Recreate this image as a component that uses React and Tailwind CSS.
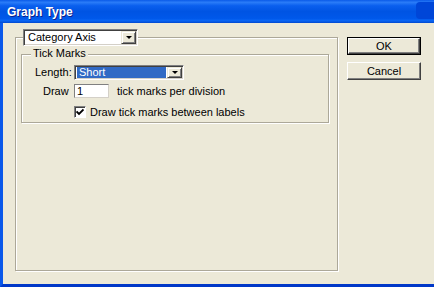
import React from "react";

function Combo({ width, height, text, selected }) {
  return (
    <div
      className="flex bg-white border border-t-[#808080] border-l-[#808080] border-b-white border-r-white shadow-[inset_1px_1px_0_#404040,inset_-1px_-1px_0_#d4d0c8]"
      style={{ width, height }}
    >
      <div className="flex-1 flex items-center p-[1px] pl-[2px] pr-0">
        <div
          className={
            "flex-1 h-full flex items-center pl-[2px] leading-none " +
            (selected ? "bg-[#316ac5] text-white" : "text-black")
          }
        >
          {text}
        </div>
      </div>
      <div className="w-[15px] m-[1px] ml-[1px] bg-[#ece9d8] flex items-center justify-center border border-t-[#ece9d8] border-l-[#ece9d8] border-b-[#404040] border-r-[#404040] shadow-[inset_1px_1px_0_white,inset_-1px_-1px_0_#808080]">
        <div className="w-0 h-0 border-l-[3px] border-r-[3px] border-t-[3px] border-l-transparent border-r-transparent border-t-black" />
      </div>
    </div>
  );
}

export default function App() {
  return (
    <div className="w-[434px] h-[287px] flex flex-col bg-[#ece9d8] font-['Liberation_Sans',Arial,sans-serif] text-[11px] text-black overflow-hidden">
      <div className="h-[23px] shrink-0 flex items-center pl-[7px] bg-[linear-gradient(to_bottom,#0a5ae8_0%,#2a7cf8_10%,#0a5fee_25%,#0054e3_50%,#0058ea_80%,#0a66f4_90%,#0048d0_100%)] relative">
        <span className="text-white font-bold text-[12px] leading-none [text-shadow:1px_1px_0_#0a1e8c]">
          Graph Type
        </span>
        <div className="absolute right-0 top-[2px] w-[18px] h-[17px] rounded-l-[4px] bg-[#0046d8]" />
      </div>
      <div className="flex-1 flex border-l-[3px] border-b-[3px] border-l-[#0a58ea] border-b-[#0038c8]">
        <div className="pl-[12px] pt-[14px] pb-[13px] flex">
          <div className="w-[323px] flex flex-col items-start border border-[#aca899] shadow-[inset_1px_1px_0_white,1px_1px_0_white] pl-[5px]">
            <div className="-mt-[9px] ml-[2px]">
              <Combo width={115} height={17} text="Category Axis" />
            </div>
            <div className="mt-[8px] w-[308px] h-[69px] flex flex-col items-start border border-[#aca899] shadow-[inset_1px_1px_0_white,1px_1px_0_white]">
              <div className="-mt-[8px] ml-[9px] px-[2px] bg-[#ece9d8] h-[13px] leading-[13px]">
                Tick Marks
              </div>
              <div className="mt-[5px] flex items-center h-[15px] pl-[13px]">
                <span className="w-[39px]">Length:</span>
                <Combo width={110} height={15} text="Short" selected />
              </div>
              <div className="mt-[4px] flex items-center h-[14px] pl-[21px]">
                <span className="w-[31px]">Draw</span>
                <div className="w-[35px] h-[14px] bg-white border border-t-[#808080] border-l-[#808080] border-b-[#d4d0c8] border-r-[#d4d0c8] flex items-center pl-[2px] leading-none">
                  1
                </div>
                <span className="ml-[8px]">tick marks per division</span>
              </div>
              <div className="mt-[8px] flex items-center h-[12px] pl-[52px]">
                <div className="w-[12px] h-[12px] bg-white border border-t-[#808080] border-l-[#808080] border-b-white border-r-white shadow-[inset_1px_1px_0_#404040] flex items-center justify-center">
                  <svg width="8" height="8" viewBox="0 0 8 8">
                    <path d="M0.5 3.5 L3 6 L7.5 1.5" stroke="black" strokeWidth="1.8" fill="none" />
                  </svg>
                </div>
                <span className="ml-[4px]">Draw tick marks between labels</span>
              </div>
            </div>
          </div>
        </div>
        <div className="ml-[9px] pt-[14px] flex flex-col gap-[7px]">
          <div className="w-[74px] h-[18px] border border-black flex">
            <div className="flex-1 flex items-center justify-center bg-[#ece9d8] border border-t-white border-l-white border-b-[#404040] border-r-[#404040] shadow-[inset_-1px_-1px_0_#808080] leading-none">
              OK
            </div>
          </div>
          <div className="w-[74px] h-[18px] flex items-center justify-center bg-[#ece9d8] border border-t-white border-l-white border-b-[#404040] border-r-[#404040] shadow-[inset_-1px_-1px_0_#808080] leading-none">
            Cancel
          </div>
        </div>
      </div>
    </div>
  );
}
